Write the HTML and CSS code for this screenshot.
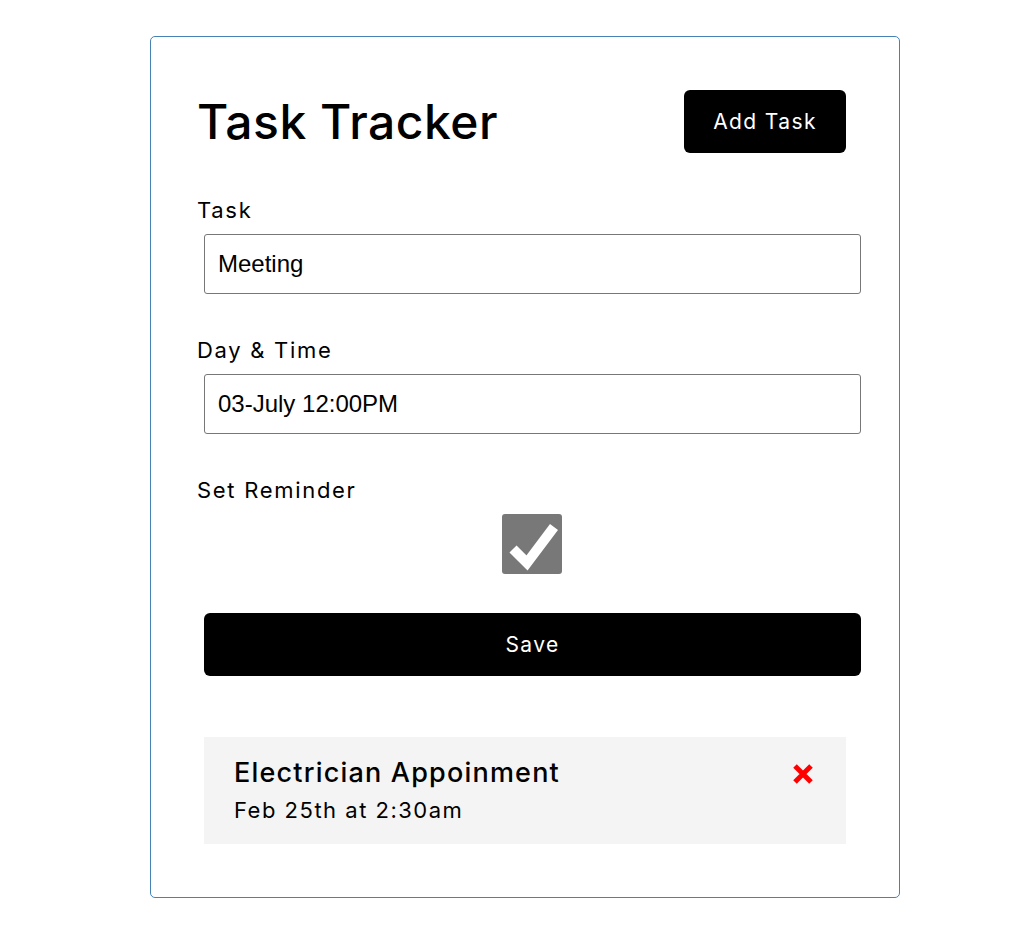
FILE: index.html
```html
<!DOCTYPE html>
<html lang="en">
<head>
    <meta charset="UTF-8">
    <meta name="viewport" content="width=device-width, initial-scale=1.0">
    <title>Task Tracker</title>
    <link rel="stylesheet" href="styles.css">
</head>
<body>

    <div class="container">
        <header class="header">
            <h1>Task Tracker</h1>
            <button class="btn">Add Task</button>
        </header>

        <form class="add-form">
            <div class="form-control">
                <label>Task</label>
                <input type="text" value="Meeting" />
            </div>

            <div class="form-control">
                <label>Day &amp; Time</label>
                <input type="text" value="03-July 12:00PM" />
            </div>

            <div class="form-control form-control-check">
                <label>Set Reminder</label>
                <!-- checked reminder box -->
                <span class="check">
                    <svg width="60" height="60" viewBox="0 0 60 60">
                        <polyline points="11,35 25,49 52,13" fill="none" stroke="#fff" stroke-width="10" />
                    </svg>
                </span>
            </div>

            <button type="button" class="btn btn-block">Save</button>
        </form>

        <div class="task">
            <div>
                <h3>Electrician Appoinment</h3>
                <p>Feb 25th at 2:30am</p>
            </div>
            <svg class="delete" width="22" height="20" viewBox="0 0 22 20">
                <path d="M3 2 L19 18 M19 2 L3 18" stroke="#ff0000" stroke-width="5" />
            </svg>
        </div>
    </div>

</body>
</html>
```

FILE: styles.css
```css
body {
    font-family: 'Inter', sans-serif;
    margin: 0;
    padding: 0;
    color: #000;
}

.container {
    width: 750px;
    box-sizing: border-box;
    margin: 36px 0 0 150px;
    padding: 53px 38px 53px 46px;
    border: 1px solid steelblue;
    border-radius: 5px;
}

.header {
    display: flex;
    justify-content: space-between;
    align-items: center;
    padding-right: 15px;
    margin-bottom: 42px;
}

.header h1 {
    margin: 0;
    font-size: 48px;
    font-weight: 500;
    letter-spacing: 0.5px;
}

.btn {
    background: #000;
    color: #fff;
    border: none;
    border-radius: 6px;
    width: 162px;
    height: 63px;
    font-family: 'Inter', sans-serif;
    font-size: 21px;
    letter-spacing: 1.4px;
    cursor: pointer;
}

.btn-block {
    display: block;
    width: calc(100% - 7px);
    margin-left: 7px;
}

.form-control {
    margin-bottom: 41px;
}

.form-control label {
    display: block;
    font-size: 22px;
    letter-spacing: 1.7px;
    line-height: 30px;
    margin-bottom: 9px;
}

.form-control input {
    display: block;
    box-sizing: border-box;
    width: calc(100% - 7px);
    height: 60px;
    margin-left: 7px;
    padding: 0 13px;
    border: 1px solid #777;
    border-radius: 3px;
    font-family: 'Liberation Sans', Arial, sans-serif;
    font-size: 24px;
    color: #000;
}

.form-control-check {
    margin-bottom: 39px;
}

.check {
    display: block;
    width: 60px;
    height: 60px;
    margin-left: 305px;
    background: #787878;
    border-radius: 3px;
}

.check svg {
    display: block;
}

.task {
    display: flex;
    justify-content: space-between;
    align-items: flex-start;
    background: #f4f4f4;
    margin: 61px 15px 0 7px;
    padding: 20px 32px 20px 30px;
}

.task h3 {
    margin: 0;
    font-size: 27px;
    font-weight: 500;
    letter-spacing: 1.2px;
    line-height: 32px;
}

.task p {
    margin: 7px 0 0;
    font-size: 22px;
    letter-spacing: 1.5px;
    line-height: 28px;
}

.delete {
    margin-top: 7px;
}
```
